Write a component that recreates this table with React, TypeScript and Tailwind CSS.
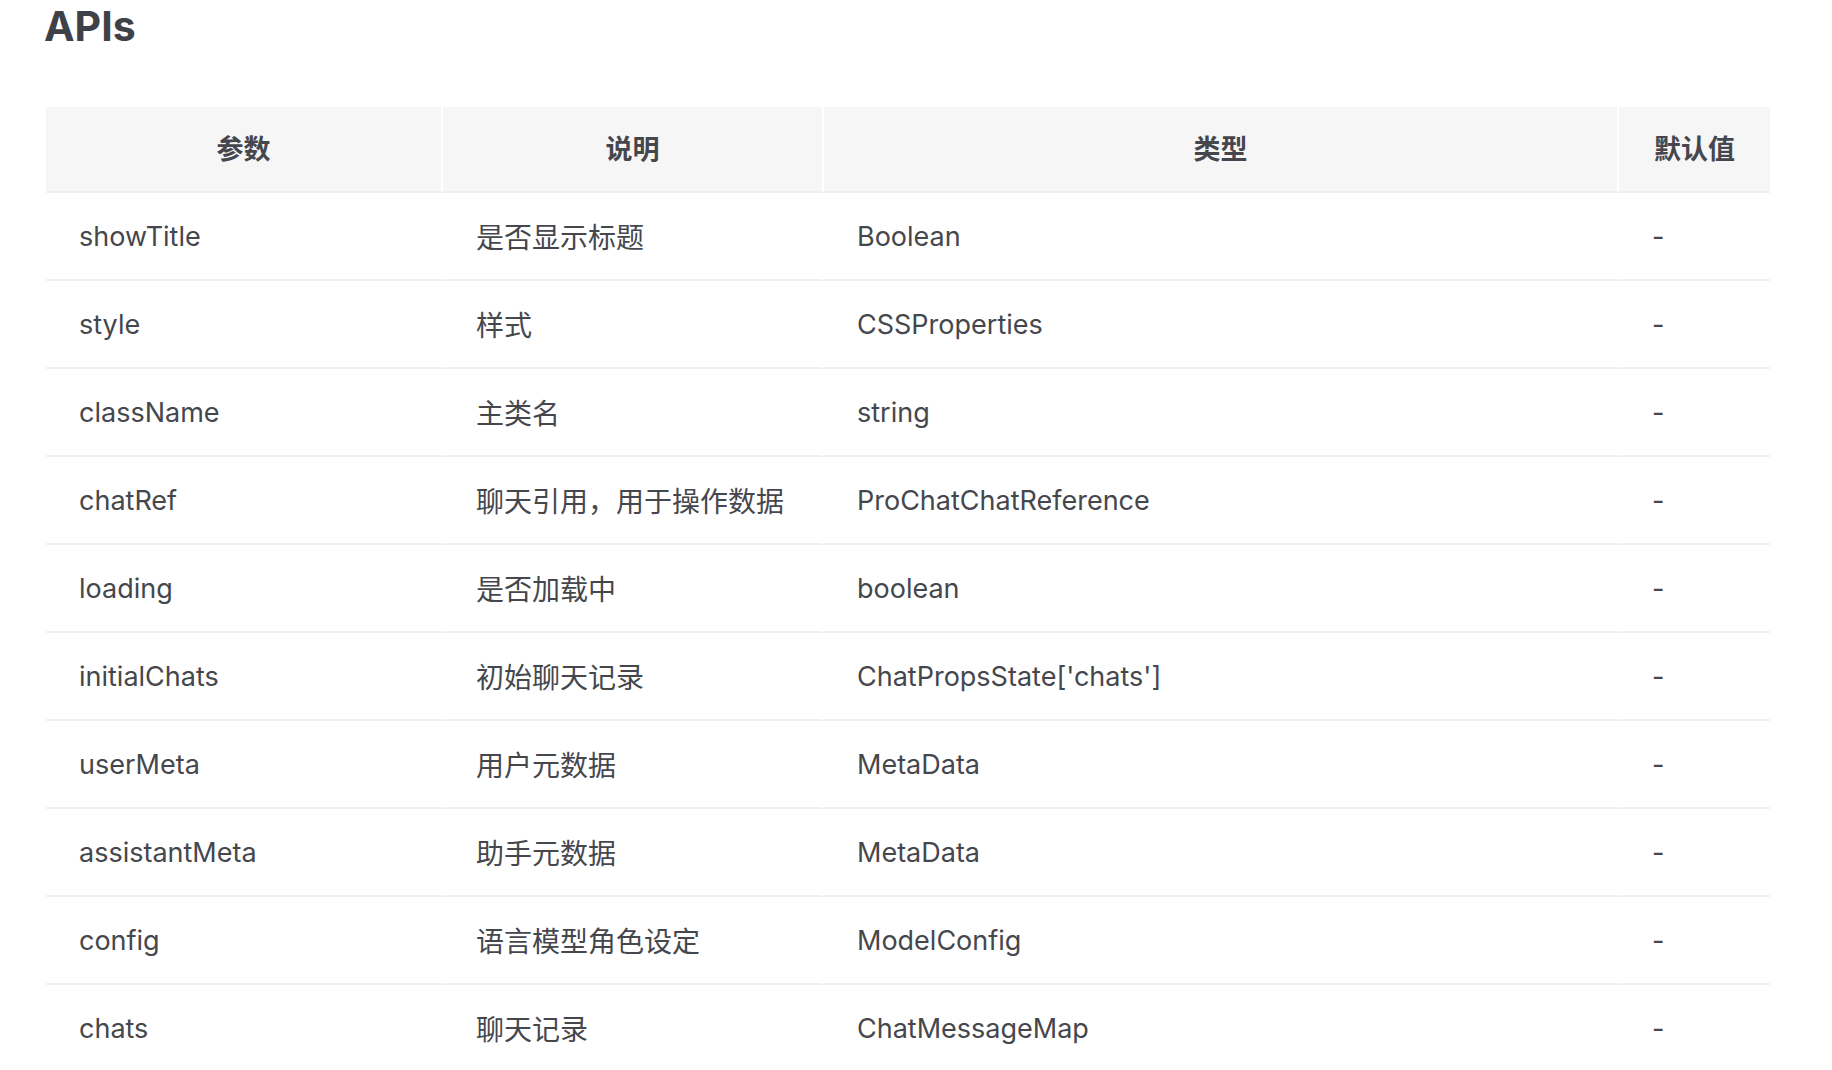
import { clsx } from 'clsx';

interface ApiRow {
  name: string;
  desc: string;
  type: string;
  defaultValue: string;
}

const rows: ApiRow[] = [
  { name: 'showTitle', desc: '是否显示标题', type: 'Boolean', defaultValue: '-' },
  { name: 'style', desc: '样式', type: 'CSSProperties', defaultValue: '-' },
  { name: 'className', desc: '主类名', type: 'string', defaultValue: '-' },
  { name: 'chatRef', desc: '聊天引用，用于操作数据', type: 'ProChatChatReference', defaultValue: '-' },
  { name: 'loading', desc: '是否加载中', type: 'boolean', defaultValue: '-' },
  { name: 'initialChats', desc: '初始聊天记录', type: "ChatPropsState['chats']", defaultValue: '-' },
  { name: 'userMeta', desc: '用户元数据', type: 'MetaData', defaultValue: '-' },
  { name: 'assistantMeta', desc: '助手元数据', type: 'MetaData', defaultValue: '-' },
  { name: 'config', desc: '语言模型角色设定', type: 'ModelConfig', defaultValue: '-' },
  { name: 'chats', desc: '聊天记录', type: 'ChatMessageMap', defaultValue: '-' },
];

const headers = ['参数', '说明', '类型', '默认值'];

export default function App() {
  return (
    <div className="h-[1070px] overflow-hidden bg-white pl-[46px] font-['Inter','Noto_Sans_CJK_SC',sans-serif] text-[#45474d]">
      <h2 className="-ml-[2px] pt-[2px] text-[41px] font-bold leading-[48px] text-[#3f4148]">APIs</h2>

      <div className="mt-[57px] grid w-[1724px] grid-cols-[397px_381px_795px_151px]">
        {headers.map((h, i) => (
          <div
            key={h}
            className={clsx(
              'flex h-[86px] items-center justify-center border-b-2 border-b-[#efefef] bg-[#f6f6f6] pt-[2px] text-[27px] font-bold',
              i < headers.length - 1 && 'border-r-2 border-r-white',
            )}
          >
            {h}
          </div>
        ))}

        {rows.map((r) => (
          <div key={r.name} className="contents">
            <div className="flex h-[88px] items-center border-r-2 border-b-2 border-r-white border-b-[#f0f0f0] pl-[33px] pt-[3px] text-[27px]">
              {r.name}
            </div>
            <div className="flex h-[88px] items-center border-r-2 border-b-2 border-r-white border-b-[#f0f0f0] pl-[33px] pt-[3px] text-[28px]">
              {r.desc}
            </div>
            <div className="flex h-[88px] items-center border-r-2 border-b-2 border-r-white border-b-[#f0f0f0] pl-[33px] pt-[3px] text-[27px]">
              {r.type}
            </div>
            <div className="flex h-[88px] items-center border-b-2 border-b-[#f0f0f0] pl-[33px] pt-[3px] text-[27px]">
              {r.defaultValue}
            </div>
          </div>
        ))}
      </div>
    </div>
  );
}
